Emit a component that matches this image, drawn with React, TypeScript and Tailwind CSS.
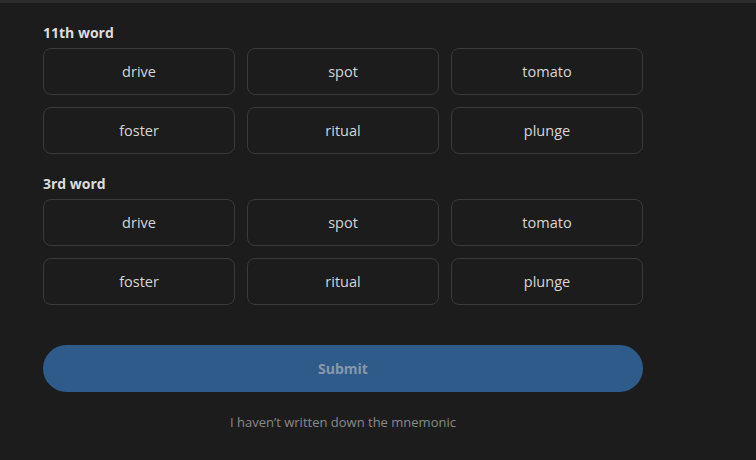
const words = [
  ['drive', 'spot', 'tomato'],
  ['foster', 'ritual', 'plunge'],
]

function WordGroup({ label }: { label: string }) {
  return (
    <div>
      <p className="mb-[5px] h-[20px] text-[14px] font-bold leading-[20px] text-[#dcdcdc]">{label}</p>
      <div className="grid grid-cols-3 gap-x-3 gap-y-3">
        {words.flat().map((w) => (
          <button
            key={w}
            className="flex h-[47px] items-center justify-center rounded-lg border border-[#3a3a3a] bg-[#1c1c1c] text-[14.5px] text-[#d6d6d6]"
          >
            {w}
          </button>
        ))}
      </div>
    </div>
  )
}

export default function App() {
  return (
    <div className="h-[460px] w-[756px] overflow-hidden bg-[#1c1c1c] font-['Open_Sans',sans-serif]">
      <div className="h-[3px] bg-[#2b2b2b]" />
      <div className="flex w-[643px] flex-col pl-[43px] pt-[20px]">
        <WordGroup label="11th word" />
        <div className="h-[20px]" />
        <WordGroup label="3rd word" />
        <button className="mt-[40px] h-[47px] rounded-full bg-[#2f5b8a] text-[14px] font-bold text-[#8898ab]">
          Submit
        </button>
        <p className="mt-[21px] text-center text-[13px] leading-[18px] text-[#8a8a8a]">I haven’t written down the mnemonic</p>
      </div>
    </div>
  )
}
